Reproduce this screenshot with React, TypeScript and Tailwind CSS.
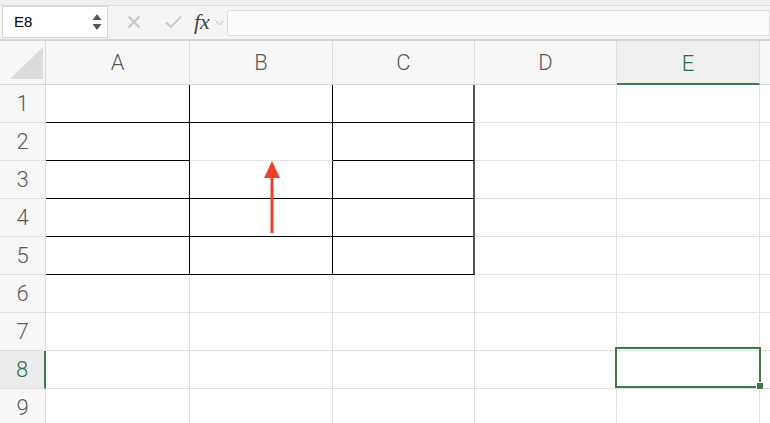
import React from "react";

const COLS = [
  { label: "A", w: "w-[144px]" },
  { label: "B", w: "w-[143px]" },
  { label: "C", w: "w-[142px]" },
  { label: "D", w: "w-[142px]" },
  { label: "E", w: "w-[143px]" },
];

const ROWS = [1, 2, 3, 4, 5, 6, 7, 8, 9];

// which cells carry the black outline (row, col index)
const cellBorder = (r: number, c: number) => {
  const inTable = r <= 5 && c <= 2;
  if (!inTable) return "border-r border-b border-[#e1e1e1]";
  const bottom = r === 2 && c === 1 ? "border-b-[#e1e1e1]" : "border-b-black";
  const right = c === 2 ? "border-r-2 border-r-[#555]" : "border-r-black";
  return `border-r border-b ${bottom} ${right}`;
};

const App: React.FC = () => (
  <div
    className="w-[770px] h-[423px] overflow-hidden bg-white relative"
    style={{ fontFamily: "Roboto, 'Liberation Sans', sans-serif" }}
  >
    {/* Formula bar */}
    <div className="h-[41px] bg-[#f4f4f4] border-t-[5px] border-t-[#efefef] border-b-2 border-b-[#d6d6d6] flex items-start relative">
      <div className="absolute left-0 right-0 top-0 h-px bg-[#dcdcdc]" />
      <div className="ml-[2px] mt-[1px] w-[106px] h-[32px] bg-white border border-[#d8d8d8] flex items-center justify-between pl-[11px] pr-[5px]">
        <span className="text-[15px] text-black" style={{ fontFamily: "'Liberation Sans', sans-serif" }}>E8</span>
        <svg width="10" height="18" viewBox="0 0 10 18">
          <path d="M5 1 L9.5 7 L0.5 7 Z" fill="#555" />
          <path d="M5 17 L9.5 11 L0.5 11 Z" fill="#555" />
        </svg>
      </div>
      <div className="flex items-center h-[32px] mt-[1px]">
        <svg className="ml-[19px]" width="14" height="14" viewBox="0 0 14 14">
          <path d="M1.5 1.5 L12.5 12.5 M12.5 1.5 L1.5 12.5" stroke="#c4c4c4" strokeWidth="1.8" />
        </svg>
        <svg className="ml-[24px]" width="17" height="14" viewBox="0 0 17 14">
          <path d="M1 7.5 L6 12 L16 1.5" stroke="#c4c4c4" strokeWidth="1.8" fill="none" />
        </svg>
        <span
          className="ml-[12px] text-[22px] italic text-[#444] leading-none"
          style={{ fontFamily: "'Liberation Serif', serif" }}
        >
          fx
        </span>
        <svg className="ml-[5px] mt-[2px]" width="9" height="6" viewBox="0 0 9 6">
          <path d="M0.5 0.5 L4.5 5 L8.5 0.5" stroke="#bbb" strokeWidth="1" fill="none" />
        </svg>
      </div>
      <div className="ml-[3px] mt-[5px] flex-1 h-[26px] bg-[#fcfcfc] border border-[#dcdcdc] rounded-l-[3px]" />
    </div>

    {/* Column headers */}
    <div className="flex h-[44px] bg-[#f7f7f7]">
      <div className="w-[46px] h-full border-r border-b border-[#d9d9d9] relative bg-[#f7f7f7]">
        <svg className="absolute left-[10px] top-[6px]" width="34" height="33" viewBox="0 0 34 33">
          <path d="M0 32 L33 0 L33 32 Z" fill="#dcdcdc" />
        </svg>
      </div>
      {COLS.map((c) => {
        const sel = c.label === "E";
        return (
          <div
            key={c.label}
            className={`${c.w} h-full flex items-center justify-center border-r border-[#dedede] text-[22px] font-light ${
              sel
                ? "bg-[#efefef] text-[#2f6e40] border-b-2 border-b-[#3d7a4c]"
                : "text-[#5a5a5a] border-b border-b-[#d9d9d9]"
            }`}
          >
            <span className={sel ? "mt-[2px]" : ""}>{c.label}</span>
          </div>
        );
      })}
      <div className="flex-1 h-full border-b border-[#d9d9d9]" />
    </div>

    {/* Rows */}
    {ROWS.map((r) => {
      const sel = r === 8;
      return (
        <div key={r} className="flex h-[38px]">
          <div
            className={`w-[46px] h-full flex items-center justify-center border-b border-[#dedede] text-[22px] font-light ${
              sel
                ? "bg-[#ececec] text-[#2f6e40] border-r-2 border-r-[#3d7a4c]"
                : "bg-[#f7f7f7] text-[#5a5a5a] border-r border-r-[#d9d9d9]"
            }`}
          >
            {r}
          </div>
          {COLS.map((c, ci) => (
            <div key={c.label} className={`${c.w} h-full ${cellBorder(r, ci)}`} />
          ))}
          <div className="flex-1 h-full border-b border-[#e1e1e1]" />
        </div>
      );
    })}

    {/* Red arrow pointing at B2's bottom edge */}
    <svg className="absolute left-[262px] top-[161px]" width="20" height="73" viewBox="0 0 20 73">
      <path d="M10 0 L18 17 L2 17 Z" fill="#e8432a" />
      <rect x="8.5" y="14" width="3" height="58" fill="#e8432a" />
    </svg>

    {/* Selected cell E8 */}
    <div className="absolute left-[615px] top-[347px] w-[146px] h-[41px] border-2 border-[#3d7a4c]" />
    <div className="absolute left-[756px] top-[382px] w-[8px] h-[8px] bg-[#3d7a4c] border border-white" />
  </div>
);

export default App;
